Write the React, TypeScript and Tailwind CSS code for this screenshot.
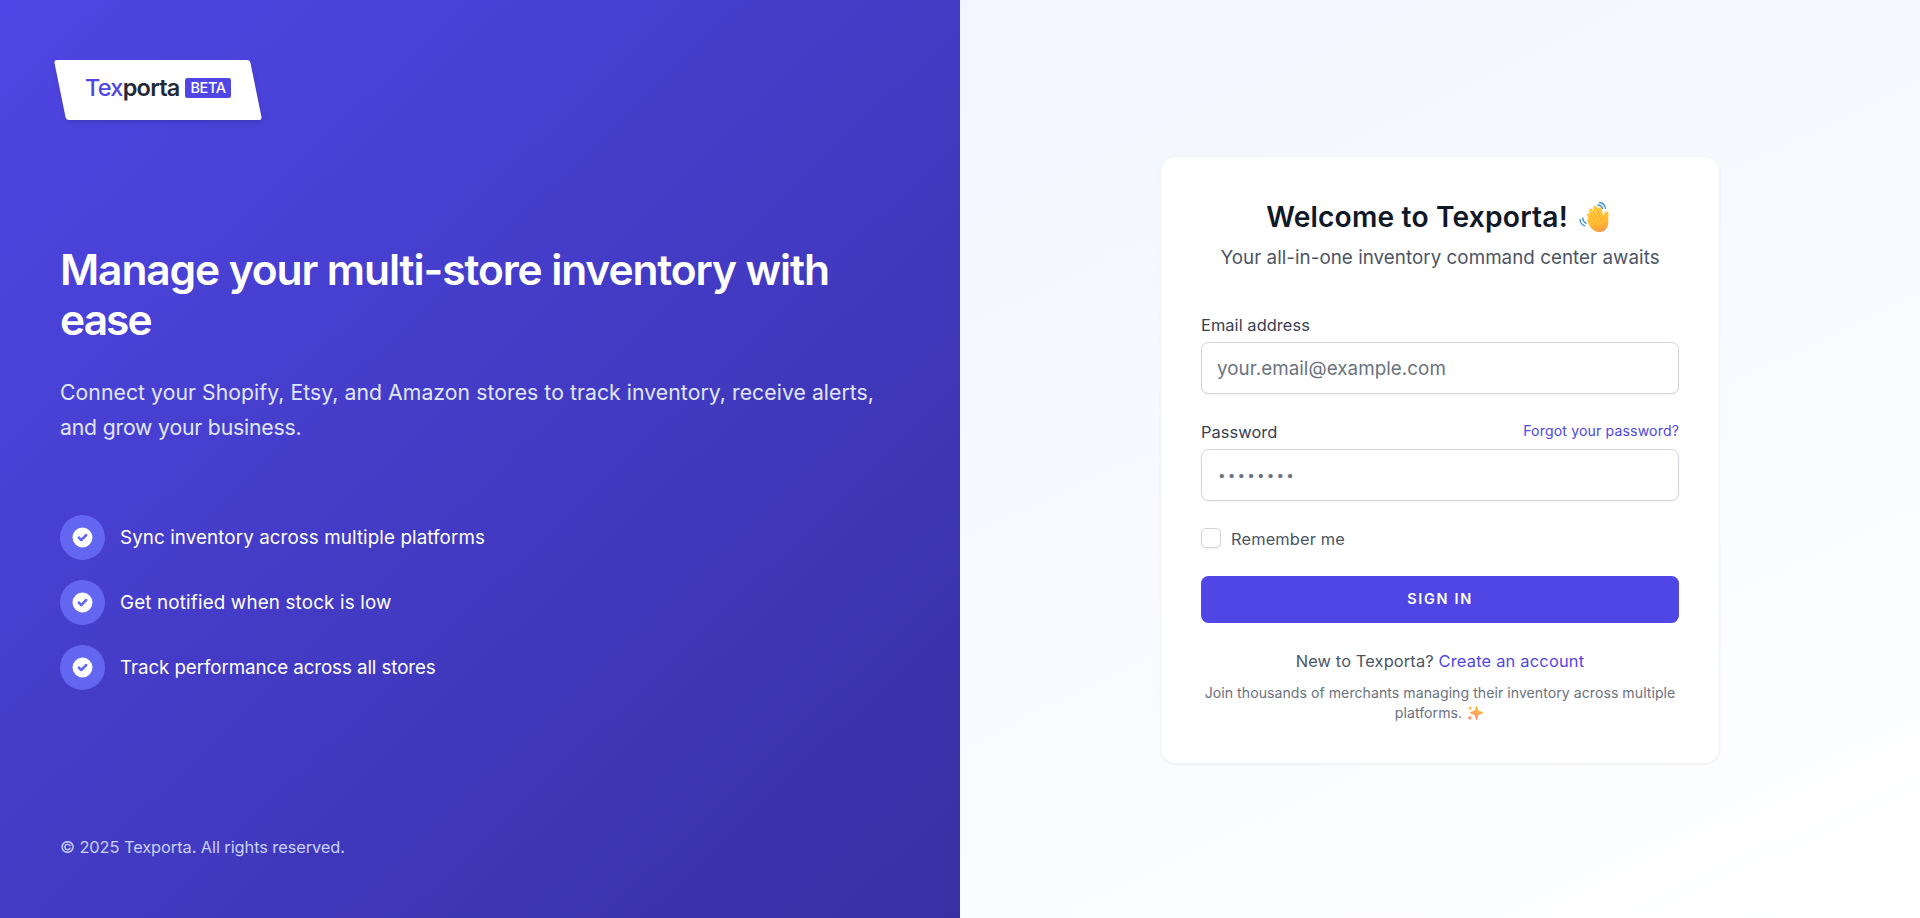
function CheckBadge() {
  return (
    <span className="flex size-[45px] shrink-0 items-center justify-center rounded-full bg-[#6366f1]">
      <svg viewBox="0 0 20 20" className="size-[25px] text-white" fill="currentColor" aria-hidden="true">
        <path
          fillRule="evenodd"
          clipRule="evenodd"
          d="M10 18a8 8 0 100-16 8 8 0 000 16zm3.707-9.293a1 1 0 00-1.414-1.414L9 10.586 7.707 9.293a1 1 0 00-1.414 1.414l2 2a1 1 0 001.414 0l4-4z"
        />
      </svg>
    </span>
  );
}

function WavingHand() {
  return (
    <svg viewBox="0 0 32 32" className="mr-[3px] ml-[11px] size-[32px]" fill="none" role="img" aria-label="Waving hand">
      <defs>
        <linearGradient id="skin" x1="12" y1="4" x2="20" y2="31" gradientUnits="userSpaceOnUse">
          <stop stopColor="#ffd047" />
          <stop offset="0.7" stopColor="#ffb92e" />
          <stop offset="1" stopColor="#f79a45" />
        </linearGradient>
      </defs>
      <g stroke="url(#skin)" strokeLinecap="round" strokeLinejoin="round">
        <path d="M19 22 10 14.200" strokeWidth="4.200" />
        <path d="M19 22 12 9.600" strokeWidth="4.200" />
        <path d="M21 21 16.200 6.800" strokeWidth="4.200" />
        <path d="M23.500 20 20.800 8.400" strokeWidth="4" />
        <path d="M26 22 27.600 12.400" strokeWidth="4" />
      </g>
      <path
        d="M10 16 24 14.500l4.800-3c.8 2.400.4 5.500.5 8.500.3 6.300-3 11-8.600 11-4.800 0-7.900-2.700-10.200-6.300L8 19.500z"
        fill="url(#skin)"
      />
      <g stroke="#e8892b" strokeOpacity="0.6" strokeWidth="0.8" strokeLinecap="round">
        <path d="m14.300 11 3.200 5.500" />
        <path d="m18.700 9 2 6.500" />
        <path d="m11.800 14 3.600 4" />
        <path d="M24.200 15.500c-2 .8-2.800 2.500-2.600 4.500" />
      </g>
      <g stroke="#3f93d2" strokeWidth="1.300" strokeLinecap="round">
        <path d="M20.500 1.500c3 .3 5.300 2.300 5.800 5.800" />
        <path d="M18.800 4c2.300.1 4 1.500 4.600 3.500" />
        <path d="M1 18.500c.2 3.200 1.700 5.300 4.700 6.300" />
        <path d="M3.800 17c.1 2.300 1.200 4.200 3.400 5.300" />
      </g>
    </svg>
  );
}

function Sparkles() {
  return (
    <svg viewBox="0 0 16 16" className="mr-0.5 ml-[5px] inline-block size-[16px] align-[-3px]" role="img" aria-label="Sparkles">
      <defs>
        <linearGradient id="glow" x1="11" y1="1" x2="6" y2="16" gradientUnits="userSpaceOnUse">
          <stop stopColor="#fcc742" />
          <stop offset="1" stopColor="#f9846b" />
        </linearGradient>
      </defs>
      <g fill="url(#glow)">
        <path d="M8.900 1.200c.3-.7 1-.7 1.300 0l1.300 4.400 4 1.500c.7.300.7 1 0 1.300l-4 1.500-1.300 4.400c-.3.700-1 .7-1.300 0L7.600 9.900l-4-1.500c-.7-.3-.7-1 0-1.300l4-1.500z" />
        <path d="m3.200.8.700 1.700 1.700.7-1.700.7-.7 1.700-.7-1.700-1.700-.7 1.700-.7z" />
        <path d="m2.900 10.200.8 1.900 1.900.8-1.900.8-.8 1.900-.8-1.900-1.900-.8 1.900-.8z" />
      </g>
    </svg>
  );
}

const features = [
  { text: "Sync inventory across multiple platforms", tracking: "tracking-[0.005em]" },
  { text: "Get notified when stock is low", tracking: "tracking-[0.009em]" },
  { text: "Track performance across all stores", tracking: "tracking-[-0.005em]" },
];

function BrandPanel() {
  return (
    <section className="flex w-1/2 flex-col bg-linear-to-br/srgb from-[#4f46e5] to-[#3730a3] p-[60px] text-white">
      <div className="relative flex h-[60px] w-[196px] items-start px-[25px] pt-[15px]">
        <div className="absolute inset-0 skew-x-[11.500deg] rounded-[3px] bg-white shadow-md" />
        <div className="relative flex items-center">
          <span className="w-[100px] text-[23.500px] leading-[25px] font-semibold tracking-[-0.032em] text-[#1f2937]">
            <span className="font-medium text-[#4f46e5]">Tex</span>porta
          </span>
          <span className="mt-px flex h-5 w-[46px] items-center justify-center rounded-[2.500px] bg-[#4f46e5] text-[14.500px] leading-5 font-medium tracking-[-0.030em] text-white">
            BETA
          </span>
        </div>
      </div>

      <h1 className="mt-[125px] h-[100px] text-[42.500px] leading-[50px] font-semibold tracking-[-0.026em]">
        Manage your multi-store inventory with <span className="tracking-[-0.045em]">ease</span>
      </h1>
      <p className="mt-[30px] text-[21.200px] leading-[35px] tracking-[0.003em] text-[#e0e7ff]">
        Connect your Shopify, Etsy, and Amazon stores to track inventory, receive alerts,{" "}
        <span className="tracking-[-0.008em]">and grow your business.</span>
      </p>
      <ul className="mt-[70px] flex flex-col gap-5">
        {features.map((feature) => (
          <li key={feature.text} className="flex items-center gap-[15px] text-[18.800px] leading-[30px]">
            <CheckBadge />
            <span className={feature.tracking}>{feature.text}</span>
          </li>
        ))}
      </ul>

      <p className="mt-auto h-[25px] text-[16.400px] leading-[28px] tracking-[-0.005em] text-[#c7d2fe]">
        © 2025 Texporta. All rights reserved.
      </p>
    </section>
  );
}

const inputClass =
  "block h-[52px] w-full rounded-[7.500px] border border-[#d1d5db] bg-white px-[15px] shadow-[0_1px_2px_rgb(0_0_0/0.05)] outline-none placeholder:text-[#6b7280]";
const labelClass = "h-[25px] text-[16.400px] leading-[27px] tracking-[0.004em] text-[#374151]";

function SignInCard() {
  return (
    <div className="mt-px w-[560px] rounded-[15px] border border-[#f3f4f6] bg-white p-10 shadow-[0_1px_2px_rgb(0_0_0/0.05)]">
      <h2 className="flex h-10 items-center justify-center text-[28.200px] font-semibold tracking-[0.006em] whitespace-nowrap text-[#111827]">
        <span className="pt-[2px]">Welcome to Texporta!</span>
        <WavingHand />
      </h2>
      <p className="mt-[5px] h-[30px] text-center text-[18.800px] leading-[32px] tracking-[0.002em] text-[#4b5563]">
        Your all-in-one inventory command center awaits
      </p>

      <form className="mt-10" onSubmit={(event) => event.preventDefault()}>
        <label htmlFor="email" className={`block ${labelClass}`}>
          Email address
        </label>
        <input
          id="email"
          type="email"
          placeholder="your.email@example.com"
          className={`mt-[5px] pt-[2px] text-[18.800px] tracking-[0.003em] ${inputClass}`}
        />

        <div className="mt-[25px] flex items-start justify-between">
          <label htmlFor="password" className={labelClass}>
            Password
          </label>
          <a href="#forgot" className="text-[14.100px] leading-[23px] tracking-[0.010em] text-[#4f46e5]">
            Forgot your password?
          </a>
        </div>
        <input
          id="password"
          type="password"
          placeholder="••••••••"
          className={`mt-[5px] pl-4 text-[13.500px] tracking-[2.150px] ${inputClass}`}
        />

        <label className="mt-[25px] flex h-[25px] items-center gap-[10px] text-[16.400px] tracking-[0.009em] text-[#4b5563]">
          <input
            type="checkbox"
            className="size-5 appearance-none rounded-[5px] border border-[#d1d5db] bg-white shadow-[0_1px_2px_rgb(0_0_0/0.05)]"
          />
          <span className="pt-[2px]">Remember me</span>
        </label>

        <button
          type="submit"
          className="mt-[25px] flex h-[47px] w-full items-center justify-center rounded-[7.500px] bg-[#4f46e5] text-[14.500px] font-semibold tracking-[0.115em] text-white uppercase"
        >
          Sign in
        </button>
      </form>

      <p className="mt-[25px] h-[25px] text-center text-[16.400px] leading-[27px] tracking-[0.008em] text-[#4b5563]">
        New to Texporta?{" "}
        <a href="#register" className="tracking-[0.013em] text-[#4f46e5]">
          Create an account
        </a>
      </p>
      <p className="mt-[10px] text-center text-[14.100px] leading-5 tracking-[0.003em] text-[#6b7280]">
        Join thousands of merchants managing their inventory across multiple platforms.
        <Sparkles />
      </p>
    </div>
  );
}

export default function App() {
  return (
    <main className="flex h-[918px] w-full bg-linear-to-br/srgb from-[#eef2ff] to-white font-['Inter','Liberation_Sans',sans-serif]">
      <BrandPanel />
      <section className="flex w-1/2 items-center justify-center">
        <SignInCard />
      </section>
    </main>
  );
}
